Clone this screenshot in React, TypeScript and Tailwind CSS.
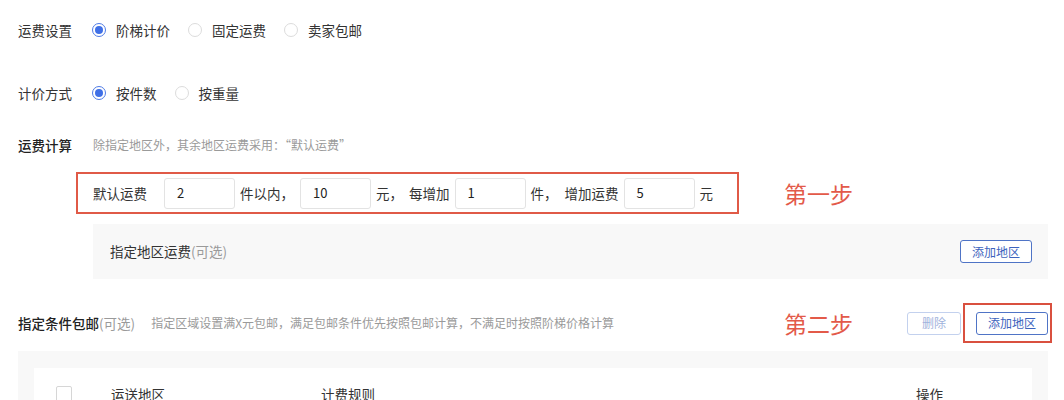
import React from 'react'

const font = { fontFamily: '"Noto Sans CJK SC", "Noto Sans", sans-serif' }

function Radio({ label, checked }: { label: string; checked?: boolean }) {
  return (
    <label className="flex items-center mr-[18px]">
      <span
        className={`w-[14px] h-[14px] rounded-full border flex items-center justify-center bg-white ${
          checked ? 'border-[#4f7be6]' : 'border-[#dcdcdc]'
        }`}
      >
        {checked && <span className="w-[8px] h-[8px] rounded-full bg-[#3f6fe6]" />}
      </span>
      <span className="ml-[10px] text-[13.5px] text-[#333]">{label}</span>
    </label>
  )
}

function NumInput({ value }: { value: string }) {
  return (
    <div className="w-[71px] h-[31px] border border-[#e3e3e3] rounded-[3px] bg-white flex items-center pl-[12px] text-[13px] text-[#222]">
      {value}
    </div>
  )
}

function Button({ children, muted }: { children: React.ReactNode; muted?: boolean }) {
  return (
    <button
      className={`h-[23px] rounded-[3px] border bg-white text-[12px] leading-none px-[11px] ${
        muted ? 'border-[#c3d1ee] text-[#9fb2dc] w-[54px]' : 'border-[#4f74c6] text-[#3d63bd]'
      }`}
    >
      {children}
    </button>
  )
}

export default function App() {
  return (
    <div className="w-[1064px] h-[400px] overflow-hidden bg-white pl-[18px] pr-[16px] pt-[20px]" style={font}>
      <div className="flex items-center h-[20px]">
        <div className="w-[74px] text-[13.5px] text-[#333]">运费设置</div>
        <Radio label="阶梯计价" checked />
        <Radio label="固定运费" />
        <Radio label="卖家包邮" />
      </div>

      <div className="flex items-center h-[20px] mt-[43px]">
        <div className="w-[74px] text-[13.5px] text-[#333]">计价方式</div>
        <Radio label="按件数" checked />
        <Radio label="按重量" />
      </div>

      <div className="flex items-center h-[20px] mt-[32px]">
        <div className="w-[75px] text-[13.5px] text-[#222] font-medium">运费计算</div>
        <div className="text-[12px] text-[#9a9a9a]">除指定地区外，其余地区运费采用：“默认运费”</div>
      </div>

      <div className="flex items-center mt-[17px]">
        <div className="ml-[58px] w-[663px] h-[42px] border-2 border-[#e05a47] flex items-center pl-[15px] gap-[5px] text-[13.5px] text-[#333]">
          <span className="mr-[12px]">默认运费</span>
          <NumInput value="2" />
          <span className="mr-[1px]">件以内，</span>
          <NumInput value="10" />
          <span className="mr-[1px]">元，</span>
          <span>每增加</span>
          <NumInput value="1" />
          <span className="mr-[2px]">件，</span>
          <span>增加运费</span>
          <NumInput value="5" />
          <span>元</span>
        </div>
        <div className="ml-[45px] text-[23px] text-[#e35a49]">第一步</div>
      </div>

      <div className="ml-[75px] mt-[10px] h-[55px] bg-[#f8f8f8] flex items-center justify-between pl-[17px] pr-[16px]">
        <div className="text-[13.5px] text-[#333]">
          指定地区运费<span className="text-[#9a9a9a]">(可选)</span>
        </div>
        <Button>添加地区</Button>
      </div>

      <div className="flex items-center h-[40px] mt-[24px]">
        <div className="w-[766px] flex items-center">
          <span className="text-[13.5px] text-[#222] font-medium">指定条件包邮</span>
          <span className="text-[13.5px] text-[#9a9a9a]">(可选)</span>
          <span className="ml-[16px] text-[12px] text-[#9a9a9a]">
            指定区域设置满X元包邮，满足包邮条件优先按照包邮计算，不满足时按照阶梯价格计算
          </span>
        </div>
        <div className="text-[23px] text-[#e35a49]">第二步</div>
        <div className="ml-auto flex items-center -mr-[4px]">
          <Button muted>删除</Button>
          <div className="ml-[2px] h-[40px] border-2 border-[#d9503f] flex items-center pl-[11px] pr-[2px]">
            <Button>添加地区</Button>
          </div>
        </div>
      </div>

      <div className="mt-[8px] bg-[#f8f8f8] px-[16px] pt-[17px] h-[80px]">
        <div className="bg-white h-full flex pt-[17px] text-[13.5px] text-[#333]">
          <div className="w-[77px] pl-[22px] pt-[1px]">
            <div className="w-[16px] h-[16px] border border-[#d6d6d6] rounded-[2px]" />
          </div>
          <div className="w-[210px] leading-[16px] pt-[1px]">运送地区</div>
          <div className="w-[595px] leading-[16px] pt-[1px]">计费规则</div>
          <div className="leading-[16px] pt-[1px]">操作</div>
        </div>
      </div>
    </div>
  )
}
